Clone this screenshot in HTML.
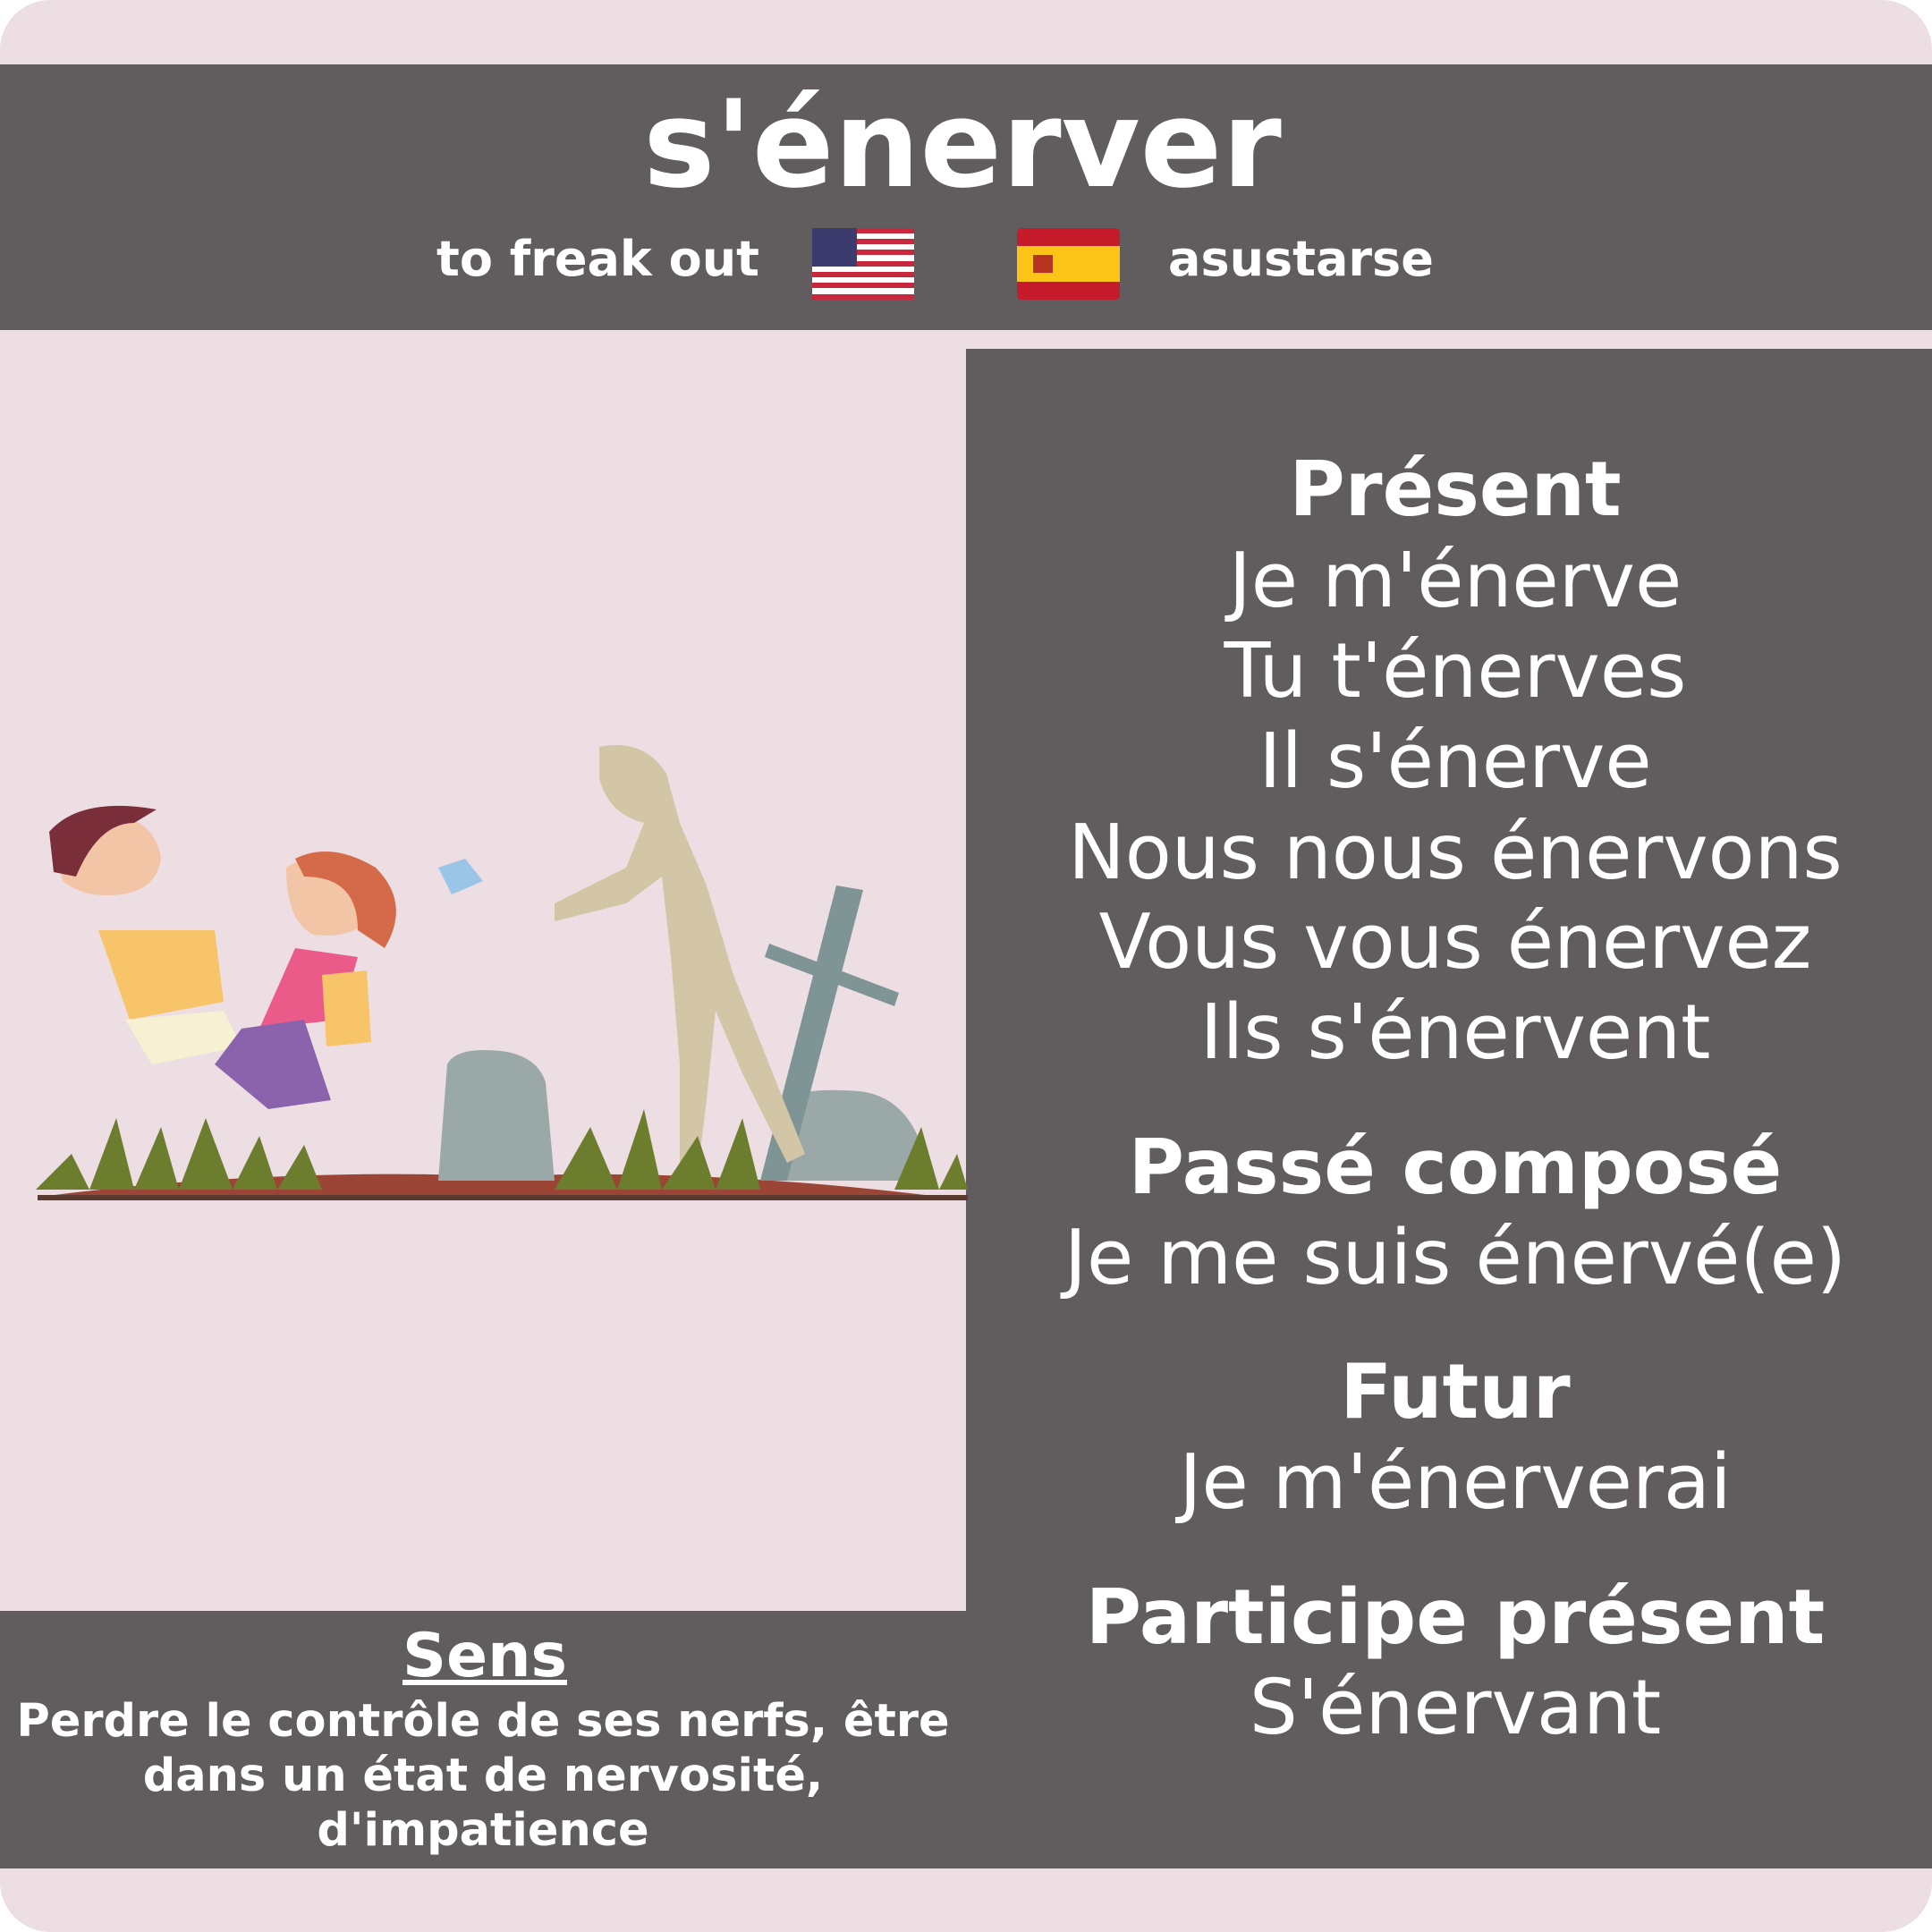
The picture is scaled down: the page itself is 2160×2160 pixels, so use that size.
<!DOCTYPE html>
<html><head><meta charset="utf-8"><style>
html,body{margin:0;padding:0;}
body{width:2160px;height:2160px;background:#fff;position:relative;overflow:hidden;font-family:"DejaVu Sans","Liberation Sans",sans-serif;}
.card{position:absolute;left:0;top:0;width:2160px;height:2160px;background:#ecdee3;border-radius:56px;overflow:hidden;}
.band{position:absolute;background:#615c5e;}
.t{position:absolute;left:0;width:100%;text-align:center;color:#fff;white-space:nowrap;}
.r{position:absolute;left:1087px;width:1080px;text-align:center;color:#fff;white-space:nowrap;height:100px;line-height:100px;font-size:85px;}
.b{font-weight:bold;}
</style></head><body>
<div class="card">
<div class="band" style="left:0;top:72px;width:2160px;height:297px;"></div>
<div class="t b" style="top:92px;height:140px;line-height:140px;font-size:135px;left:-4px;">s'énerver</div>
<div style="position:absolute;left:488px;top:255px;height:70px;line-height:70px;font-size:54px;font-weight:bold;color:#fff;">to freak out</div>
<div style="position:absolute;left:1306px;top:255px;height:70px;line-height:70px;font-size:54px;font-weight:bold;color:#fff;">asustarse</div>
<svg style="position:absolute;left:908px;top:255px" width="114" height="80" viewBox="0 0 114 80">
<rect width="114" height="80" rx="5" fill="#fff"/>
<g fill="#c8283c"><rect y="0" width="114" height="6"/><rect y="12" width="114" height="6"/><rect y="24" width="114" height="6"/><rect y="37" width="114" height="6"/><rect y="49" width="114" height="6"/><rect y="61" width="114" height="6"/><rect y="74" width="114" height="6"/></g>
<rect width="50" height="43" fill="#3c3b6e"/></svg>
<svg style="position:absolute;left:1137px;top:255px" width="115" height="80" viewBox="0 0 115 80">
<rect width="115" height="80" rx="5" fill="#c61b2b"/><rect y="20" width="115" height="40" fill="#fcc417"/><rect x="18" y="30" width="22" height="20" fill="#b5341f"/></svg>
<div class="band" style="left:1080px;top:390px;width:1080px;height:1699px;"></div>
<div class="band" style="left:0;top:1801px;width:1080px;height:288px;"></div>
<div class="r b" style="top:498px;">Présent</div>
<div class="r" style="top:600px;">Je m'énerve</div>
<div class="r" style="top:701px;">Tu t'énerves</div>
<div class="r" style="top:802px;">Il s'énerve</div>
<div class="r" style="top:904px;">Nous nous énervons</div>
<div class="r" style="top:1004px;">Vous vous énervez</div>
<div class="r" style="top:1105px;">Ils s'énervent</div>
<div class="r b" style="top:1256px;">Passé composé</div>
<div class="r" style="top:1357px;">Je me suis énervé(e)</div>
<div class="r b" style="top:1507px;">Futur</div>
<div class="r" style="top:1608px;">Je m'énerverai</div>
<div class="r b" style="top:1759px;">Participe présent</div>
<div class="r" style="top:1860px;">S'énervant</div>
<div style="position:absolute;left:2px;width:1080px;top:1816px;height:72px;line-height:72px;text-align:center;color:#fff;font-size:68px;font-weight:bold;text-decoration:underline;">Sens</div>
<div style="position:absolute;left:0;width:1080px;top:1894px;line-height:61px;text-align:center;color:#fff;font-size:51px;font-weight:bold;">Perdre le contrôle de ses nerfs, être<br>dans un état de nervosité,<br>d'impatience</div>
<svg style="position:absolute;left:0;top:810px" width="1085" height="540" viewBox="0 0 1085 540">
<path d="M45 528 Q300 495 560 505 Q800 495 1082 532 Z" fill="#9a4535"/>
<rect x="42" y="526" width="1040" height="6" fill="#5a3a2f"/>
<path d="M500 380 Q510 360 560 365 Q600 370 610 400 L620 510 L490 510 Z" fill="#9aa8a8"/>
<path d="M870 420 Q900 405 960 410 Q1010 415 1030 470 L1040 510 L870 510 Z" fill="#9aa8a8"/>
<path d="M850 510 L935 180 L965 185 L880 510 Z" fill="#7f9595"/>
<path d="M860 245 L1005 300 L1000 315 L855 260 Z" fill="#7f9595"/>
<path d="M670 025 Q720 15 745 55 L760 110 L790 180 L820 280 L860 380 L900 480 L880 490 L830 390 L800 320 L790 420 L780 500 L760 500 L760 380 L750 260 L740 170 L700 200 L620 220 L620 200 L700 160 L720 110 Q680 100 670 60 Z" fill="#d2c6a6"/>
<path d="M60 130 Q80 100 130 100 Q175 110 180 150 Q175 185 135 190 Q95 195 70 175 Z" fill="#f3c5a7"/>
<path d="M55 120 Q90 80 175 95 L150 110 Q110 110 85 170 L60 165 Z" fill="#7a2e3a"/>
<path d="M110 230 L240 230 L250 310 L145 330 Z" fill="#f7c46a"/>
<path d="M140 330 L250 320 L270 360 L170 380 Z" fill="#f6f1d2"/>
<path d="M320 160 Q350 140 390 150 Q420 170 410 220 Q390 240 350 235 Q320 220 320 160 Z" fill="#f3c5a7"/>
<path d="M330 150 Q370 130 420 160 Q460 200 430 250 L400 230 Q400 170 340 170 Z" fill="#d56a4a"/>
<path d="M330 250 L400 260 L380 330 L290 340 Z" fill="#eb5b8a"/>
<path d="M270 340 L340 330 L370 420 L300 430 L240 380 Z" fill="#8b63ad"/>
<path d="M360 280 L410 275 L415 355 L365 360 Z" fill="#f7c46a"/>
<path d="M490 160 L520 150 L540 175 L505 190 Z" fill="#9bc5e6"/>
<g fill="#6d7d2e"><path d="M40 520 L80 480 L100 520 L130 440 L150 520 L180 450 L200 520 L230 440 L260 520 L290 460 L310 520 L340 470 L360 520 Z"/><path d="M620 520 L660 450 L690 520 L720 430 L740 520 L780 460 L800 520 L830 440 L850 520 Z"/><path d="M1000 520 L1030 450 L1050 520 L1070 480 L1082 520 Z"/></g>
</svg>
</div>
</body></html>
